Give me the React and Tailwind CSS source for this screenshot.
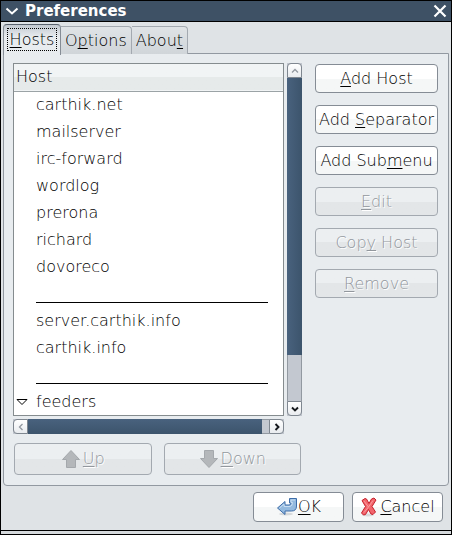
import React from "react";

function Label({ text, hot }) {
  const i = text.indexOf(hot);
  return (
    <span className="whitespace-pre">
      {text.slice(0, i)}
      <span className="underline decoration-1 underline-offset-2 [text-decoration-skip-ink:none]">{hot}</span>
      {text.slice(i + hot.length)}
    </span>
  );
}

function Button({ text, hot, disabled, icon, className }) {
  const tone = disabled
    ? "border-[#a3a9b0] bg-linear-to-b from-[#eceff1] from-50% to-[#e3e6e8] to-50% text-[#92979d] [text-shadow:1px_1px_0_#ffffff]"
    : "border-[#858c95] bg-linear-to-b from-white from-50% to-[#f5f7f7] to-50% text-black";
  return (
    <button
      type="button"
      disabled={disabled}
      className={`flex items-center justify-center rounded border ${tone} ${className}`}
    >
      {icon}
      <Label text={text} hot={hot} />
    </button>
  );
}

function Tab({ text, hot, active }) {
  return active ? (
    <button
      type="button"
      role="tab"
      aria-selected="true"
      className="-mb-px h-[31px] w-[58px] rounded-t border border-b-0 border-[#858c95] border-t-[#59626d] bg-linear-to-b from-[#c3c9d0] to-[#e8ecef] to-40% px-[3px] pt-[3px] pb-1"
    >
      <span className="flex h-full items-center justify-center border border-dotted border-black">
        <Label text={text} hot={hot} />
      </span>
    </button>
  ) : (
    <button
      type="button"
      role="tab"
      aria-selected="false"
      className="flex h-7 items-center justify-center rounded-tr border border-b-0 border-l-0 border-[#a3a9b0] bg-linear-to-b from-[#dfe3e6] to-[#d0d5d9] px-1"
    >
      <Label text={text} hot={hot} />
    </button>
  );
}

function Chevron({ d, dim }) {
  return (
    <svg viewBox="0 0 12 12" className="size-3" fill="none" stroke={dim ? "#9298a0" : "#16191d"} strokeWidth={dim ? 1.3 : 1.9}>
      <path d={d} />
    </svg>
  );
}

function ScrollButton({ label, d, dim, className }) {
  return (
    <button
      type="button"
      aria-label={label}
      className={`flex size-[15px] shrink-0 items-center justify-center border border-[#7f8790] bg-linear-to-b from-white to-[#e9ecef] ${className}`}
    >
      <Chevron d={d} dim={dim} />
    </button>
  );
}

const UpArrow = (
  <svg viewBox="0 0 20 20" className="mr-0.5 size-5" fill="#b4b7ba" stroke="#a4a8ac" strokeWidth="1">
    <path d="M10 1.5 18.5 10.5H14.5V18.5H5.5V10.5H1.5Z" />
  </svg>
);

const DownArrow = (
  <svg viewBox="0 0 20 20" className="mr-0.5 size-5" fill="#b4b7ba" stroke="#a4a8ac" strokeWidth="1">
    <path d="M5.5 1.5H14.5V9.5H18.5L10 18.5 1.5 9.5H5.5Z" />
  </svg>
);

const OkIcon = (
  <svg viewBox="0 0 22 20" className="h-5 w-[22px]">
    <ellipse cx="10" cy="17" rx="7" ry="1.5" fill="#d5d8da" />
    <path
      d="M1.5 11 9 4.5V8H13Q15 8 15 6H13.5V1.5H20.5V9Q20.5 14 15.5 14H9V17.5Z"
      fill="#94badf"
      stroke="#3c6ca8"
      strokeLinejoin="round"
    />
    <path d="M3.5 11 8 7V9.5H14Q16.5 9 16.5 5.5H15V3H19" fill="none" stroke="#c9def2" />
  </svg>
);

const CancelIcon = (
  <svg viewBox="0 0 18 20" className="mr-0.5 h-5 w-[18px]">
    <ellipse cx="8" cy="18" rx="6" ry="1.5" fill="#d9dadb" />
    <path
      d="M2 3.5 5 1.5 6.5 2 9 6.5 11.5 2 14 1 16 3 12 9.5 15.5 15 13 17.5 11 17 8.5 12.5 5.5 17.5 3.5 18 1.5 16 5.5 9.5Z"
      fill="#f2666d"
      stroke="#c5202c"
      strokeLinejoin="round"
    />
    <path d="M4 4 8.5 10 13 3.5M8.5 10 4 15.5" fill="none" stroke="#fa9a9e" />
  </svg>
);

const rows = [
  "carthik.net",
  "mailserver",
  "irc-forward",
  "wordlog",
  "prerona",
  "richard",
  "dovoreco",
  null,
  "server.carthik.info",
  "carthik.info",
  null,
  "feeders",
];

function HostTable() {
  return (
    <div className="border border-[#858c8f] bg-white">
      <table className="w-full table-fixed border-collapse text-left">
        <thead>
          <tr className="h-[27px] border-b border-[#9ba3a6] bg-linear-to-b from-[#f1f4f5] from-50% to-[#e6eaea] to-50%">
            <th scope="col" className="px-0.5 font-extralight">Host</th>
          </tr>
        </thead>
        <tbody>
          {rows.map((name, i) => (
            <tr key={i} className="h-[27px]">
              <td className="p-0">
                {name === null ? (
                  <hr className="mt-[18px] mr-[15px] ml-[22px] border-t border-black" />
                ) : (
                  <div className="flex items-center">
                    <span className="flex w-[22px] shrink-0 items-center pl-0.5">
                      {name === "feeders" && (
                        <svg viewBox="0 0 12 8" className="h-2 w-3" fill="white" stroke="black">
                          <path d="M1 1.5H11L6 6.5Z" />
                        </svg>
                      )}
                    </span>
                    {name}
                  </div>
                )}
              </td>
            </tr>
          ))}
        </tbody>
      </table>
    </div>
  );
}

export default function App() {
  return (
    <main className="flex min-h-screen flex-col border border-black bg-[#dfe3e6] font-['DejaVu_Sans',sans-serif] text-base leading-5 font-extralight text-black">
      <header className="flex h-[21px] items-center border-b border-black bg-[#3e5165] text-white">
        <button type="button" aria-label="Window menu" className="flex w-6 pl-1">
          <svg viewBox="0 0 14 10" className="h-2.5 w-3.5" fill="none" stroke="white" strokeWidth="2">
            <path d="M1.5 2.5 7 7.5 12.5 2.5" />
          </svg>
        </button>
        <h1 className="grow text-[15px] leading-5 font-bold">Preferences</h1>
        <button type="button" aria-label="Close" className="flex pr-1">
          <svg viewBox="0 0 14 14" className="size-3.5" fill="none" stroke="white" strokeWidth="2.2">
            <path d="M1.5 1.5 12.5 12.5M12.5 1.5 1.5 12.5" />
          </svg>
        </button>
      </header>

      <div className="flex grow flex-col px-0.5 pt-0.5">
        <div role="tablist" className="z-10 -mb-px flex items-end">
          <Tab text="Hosts" hot="H" active />
          <Tab text="Options" hot="p" />
          <Tab text="About" hot="t" />
        </div>

        <section className="flex gap-[13px] rounded-b border border-[#9299a1] bg-[#e8ecef] pt-[9px] pr-2.5 pb-2.5 pl-[9px]">
          <div className="min-w-0 grow">
            <div className="grid grid-cols-[1fr_15px] gap-[3px]">
              <HostTable />
              <div className="flex flex-col bg-[#c3c8d0]">
                <ScrollButton label="Scroll up" dim d="M3 7.5 6 4.5 9 7.5" className="rounded-t" />
                <div className="grow-[277] bg-linear-to-r from-[#49627e] to-[#3c546c]" />
                <div className="grow-[46] border-x border-[#9299a1]" />
                <ScrollButton label="Scroll down" d="M3 4.5 6 7.5 9 4.5" className="rounded-b" />
              </div>
              <div className="flex bg-[#c3c8d0]">
                <ScrollButton label="Scroll left" dim d="M7.5 3 4.5 6 7.5 9" className="rounded-l" />
                <div className="grow-[234] bg-linear-to-b from-[#49627e] to-[#3c546c]" />
                <div className="grow-[7] border-y border-[#9299a1]" />
                <ScrollButton label="Scroll right" d="M4.5 3 7.5 6 4.5 9" className="rounded-r" />
              </div>
            </div>
            <div className="mt-[9px] grid grid-cols-2 gap-3 px-px">
              <Button text="Up" hot="U" disabled icon={UpArrow} className="h-8" />
              <Button text="Down" hot="D" disabled icon={DownArrow} className="h-8" />
            </div>
          </div>
          <div className="flex w-[123px] shrink-0 flex-col gap-3 pt-px">
            <Button text="Add Host" hot="A" className="h-[29px]" />
            <Button text="Add Separator" hot="S" className="h-[29px]" />
            <Button text="Add Submenu" hot="m" className="h-[29px]" />
            <Button text="Edit" hot="E" disabled className="h-[29px]" />
            <Button text="Copy Host" hot="y" disabled className="h-[29px]" />
            <Button text="Remove" hot="R" disabled className="h-[29px]" />
          </div>
        </section>

        <div className="flex justify-end gap-2 pt-1.5 pr-1.5 pb-2">
          <Button text="OK" hot="O" icon={OkIcon} className="h-[30px] w-[91px]" />
          <Button text="Cancel" hot="C" icon={CancelIcon} className="h-[30px] w-[91px]" />
        </div>
      </div>
      <div className="h-1 border-t border-black bg-[#d5d9dc]" />
    </main>
  );
}
